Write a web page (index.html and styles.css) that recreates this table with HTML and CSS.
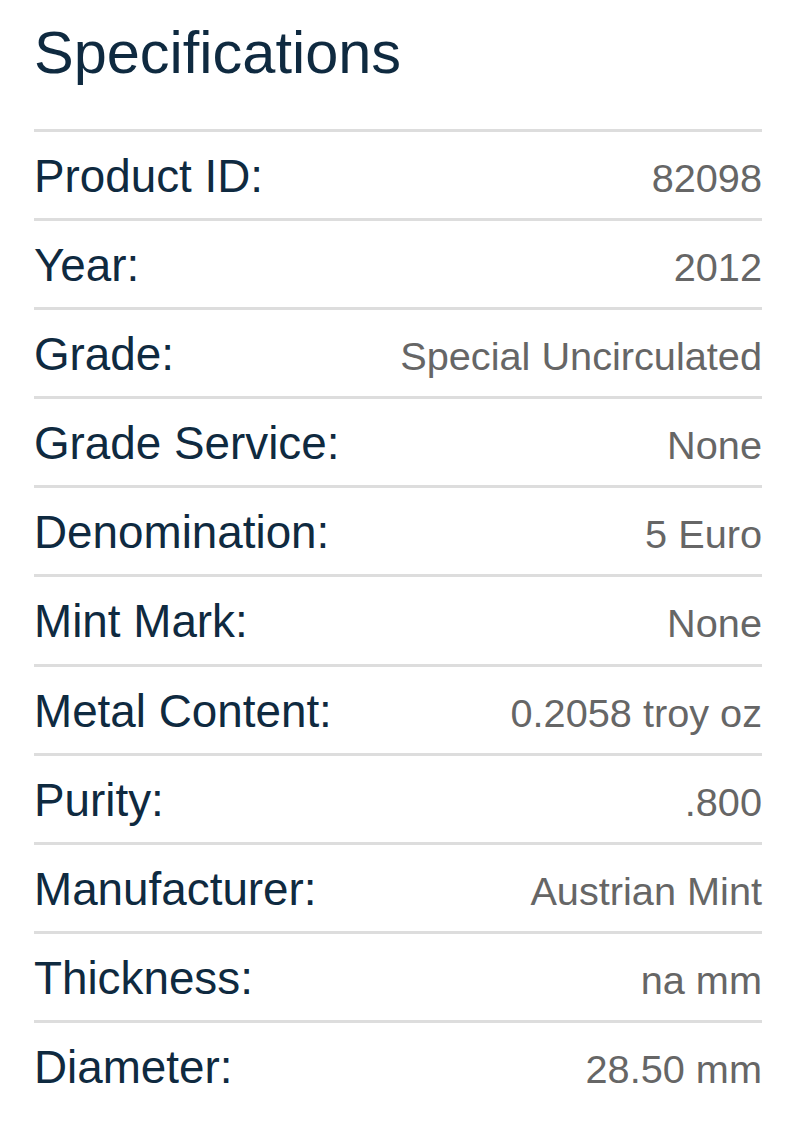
FILE: index.html
```html
<!DOCTYPE html>
<html lang="en">
<head>
<meta charset="utf-8">
<title>Specifications</title>
<link rel="stylesheet" href="styles.css">
</head>
<body>
<section class="specs">
  <h1 class="specs-title">Specifications</h1>
  <div class="spec-row"><span class="spec-label">Product ID:</span><span class="spec-value">82098</span></div>
  <div class="spec-row"><span class="spec-label">Year:</span><span class="spec-value">2012</span></div>
  <div class="spec-row"><span class="spec-label">Grade:</span><span class="spec-value">Special Uncirculated</span></div>
  <div class="spec-row"><span class="spec-label">Grade Service:</span><span class="spec-value">None</span></div>
  <div class="spec-row"><span class="spec-label">Denomination:</span><span class="spec-value">5 Euro</span></div>
  <div class="spec-row"><span class="spec-label">Mint Mark:</span><span class="spec-value">None</span></div>
  <div class="spec-row"><span class="spec-label">Metal Content:</span><span class="spec-value">0.2058 troy oz</span></div>
  <div class="spec-row"><span class="spec-label">Purity:</span><span class="spec-value">.800</span></div>
  <div class="spec-row"><span class="spec-label">Manufacturer:</span><span class="spec-value">Austrian Mint</span></div>
  <div class="spec-row"><span class="spec-label">Thickness:</span><span class="spec-value">na mm</span></div>
  <div class="spec-row"><span class="spec-label">Diameter:</span><span class="spec-value">28.50 mm</span></div>
</section>
</body>
</html>
```
FILE: styles.css
```css
html, body {
  margin: 0;
  padding: 0;
  background: #ffffff;
}
body {
  font-family: "Liberation Sans", Arial, sans-serif;
}
.specs {
  padding: 0 38px 0 34px;
}
.specs-title {
  margin: 0 0 42px 0;
  padding-top: 19px;
  font-size: 59.5px;
  line-height: 68px;
  font-weight: 400;
  color: #0f2a40;
}
.spec-row {
  display: flex;
  justify-content: space-between;
  align-items: baseline;
  border-top: 3px solid #dddddd;
  box-sizing: content-box;
  height: 84.1px;
  padding-top: 2px;
  line-height: 86px;
}
.spec-label {
  font-size: 45.8px;
  color: #0f2a40;
}
.spec-value {
  font-size: 39.7px;
  color: #666666;
}
```
